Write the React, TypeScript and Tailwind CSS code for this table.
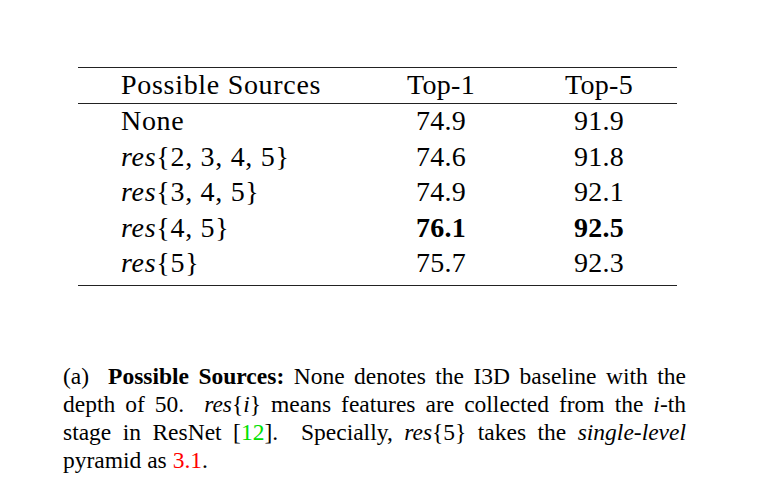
import React from 'react'

const serif = { fontFamily: '"Liberation Serif", "Times New Roman", serif' }

function Res({ children }: { children: React.ReactNode }) {
  return (
    <span>
      <span className="italic">res</span>
      {'{'}
      {children}
      {'}'}
    </span>
  )
}

const rows: { src: React.ReactNode; top1: string; top5: string; best?: boolean }[] = [
  { src: 'None', top1: '74.9', top5: '91.9' },
  { src: <Res>2, 3, 4, 5</Res>, top1: '74.6', top5: '91.8' },
  { src: <Res>3, 4, 5</Res>, top1: '74.9', top5: '92.1' },
  { src: <Res>4, 5</Res>, top1: '76.1', top5: '92.5', best: true },
  { src: <Res>5</Res>, top1: '75.7', top5: '92.3' },
]

function Row({ a, b, c, bold, h }: { a: React.ReactNode; b: string; c: string; bold?: boolean; h: string }) {
  return (
    <div className={`grid grid-cols-[303px_120px_176px] items-center leading-none ${h}`}>
      <div className="pl-[43px] tracking-[0.7px]">{a}</div>
      <div className={`text-center tracking-[0.3px] ${bold ? 'font-bold' : ''}`}>{b}</div>
      <div className={`text-center pl-[20px] tracking-[0.3px] ${bold ? 'font-bold' : ''}`}>{c}</div>
    </div>
  )
}

export default function App() {
  return (
    <div className="w-[760px] h-[491px] bg-white text-black overflow-hidden" style={serif}>
      {/* table */}
      <div className="ml-[78px] mt-[67px] w-[599px] text-[28px]">
        <div className="border-t-[1.5px] border-b-[1.5px] border-[#222]">
          <Row a="Possible Sources" b="Top-1" c="Top-5" h="h-[34.5px]" />
        </div>
        <div className="border-b-[1.5px] border-[#222] pb-[4px]">
          {rows.map((r, i) => (
            <Row key={i} a={r.src} b={r.top1} c={r.top5} bold={r.best} h="h-[35.5px]" />
          ))}
        </div>
      </div>

      {/* caption */}
      <div className="ml-[63px] mt-[75.5px] w-[623px] text-[23.5px] leading-[28px]">
        <div className="text-justify [text-align-last:justify]">
          (a)&nbsp; <span className="font-bold">Possible Sources:</span> None denotes the I3D baseline with the
        </div>
        <div className="text-justify [text-align-last:justify]">
          depth of 50.&nbsp; <Res><span className="italic">i</span></Res> means features are collected from the <span className="italic">i</span>-th
        </div>
        <div className="text-justify [text-align-last:justify]">
          stage in ResNet [<span className="text-[#00e000]">12</span>].&nbsp; Specially, <Res>5</Res> takes the <span className="italic">single-level</span>
        </div>
        <div>
          pyramid as <span className="text-[#ff0000]">3.1</span>.
        </div>
      </div>
    </div>
  )
}
